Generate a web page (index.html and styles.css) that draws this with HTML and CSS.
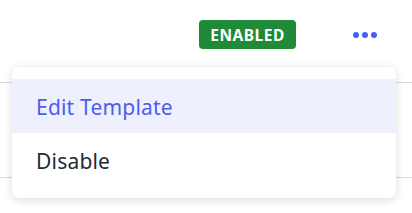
FILE: index.html
```html
<!DOCTYPE html>
<html>
<head>
<meta charset="utf-8">
<link rel="stylesheet" href="styles.css">
</head>
<body>
<div class="table">
  <div class="row head">
    <span class="badge">ENABLED</span>
    <button class="more" aria-label="More actions">
      <svg width="24" height="6" viewBox="0 0 24 6"><circle cx="3" cy="3" r="3"/><circle cx="12" cy="3" r="3"/><circle cx="21" cy="3" r="3"/></svg>
    </button>
  </div>
  <div class="row body"></div>
</div>
<div class="menu">
  <div class="item active">Edit Template</div>
  <div class="item">Disable</div>
</div>
</body>
</html>
```
FILE: styles.css
```css
html, body {
  margin: 0;
  padding: 0;
  background: #ffffff;
  font-family: "Noto Sans", "Open Sans", sans-serif;
}
.table {
  width: 412px;
}
.row {
  box-sizing: border-box;
  border-bottom: 1px solid #d6d8e8;
}
.head {
  height: 83px;
  display: flex;
  justify-content: flex-end;
  align-items: flex-start;
  padding: 20px 35px 0 0;
}
.body {
  height: 95px;
}
.badge {
  box-sizing: border-box;
  height: 29px;
  width: 97px;
  display: flex;
  align-items: center;
  justify-content: center;
  background: #1f8a37;
  color: #ffffff;
  font-weight: 700;
  font-size: 15.5px;
  letter-spacing: 0.5px;
  border-radius: 4px;
}
.more {
  margin: 0 0 0 57px;
  padding: 0;
  border: 0;
  background: none;
  height: 29px;
  display: flex;
  align-items: center;
}
.more svg {
  fill: #4261f0;
  display: block;
}
.menu {
  position: absolute;
  top: 67px;
  left: 12px;
  width: 384px;
  box-sizing: border-box;
  padding: 12px 0 11px;
  background: #ffffff;
  border-radius: 7px;
  box-shadow: 0 2px 10px rgba(0, 0, 0, 0.14);
}
.item {
  box-sizing: border-box;
  height: 54px;
  display: flex;
  align-items: center;
  padding: 2px 0 0 24px;
  font-size: 21px;
  letter-spacing: 0.2px;
  color: #212b36;
}
.item.active {
  background: #eff0fe;
  color: #4b5cf2;
}
```
